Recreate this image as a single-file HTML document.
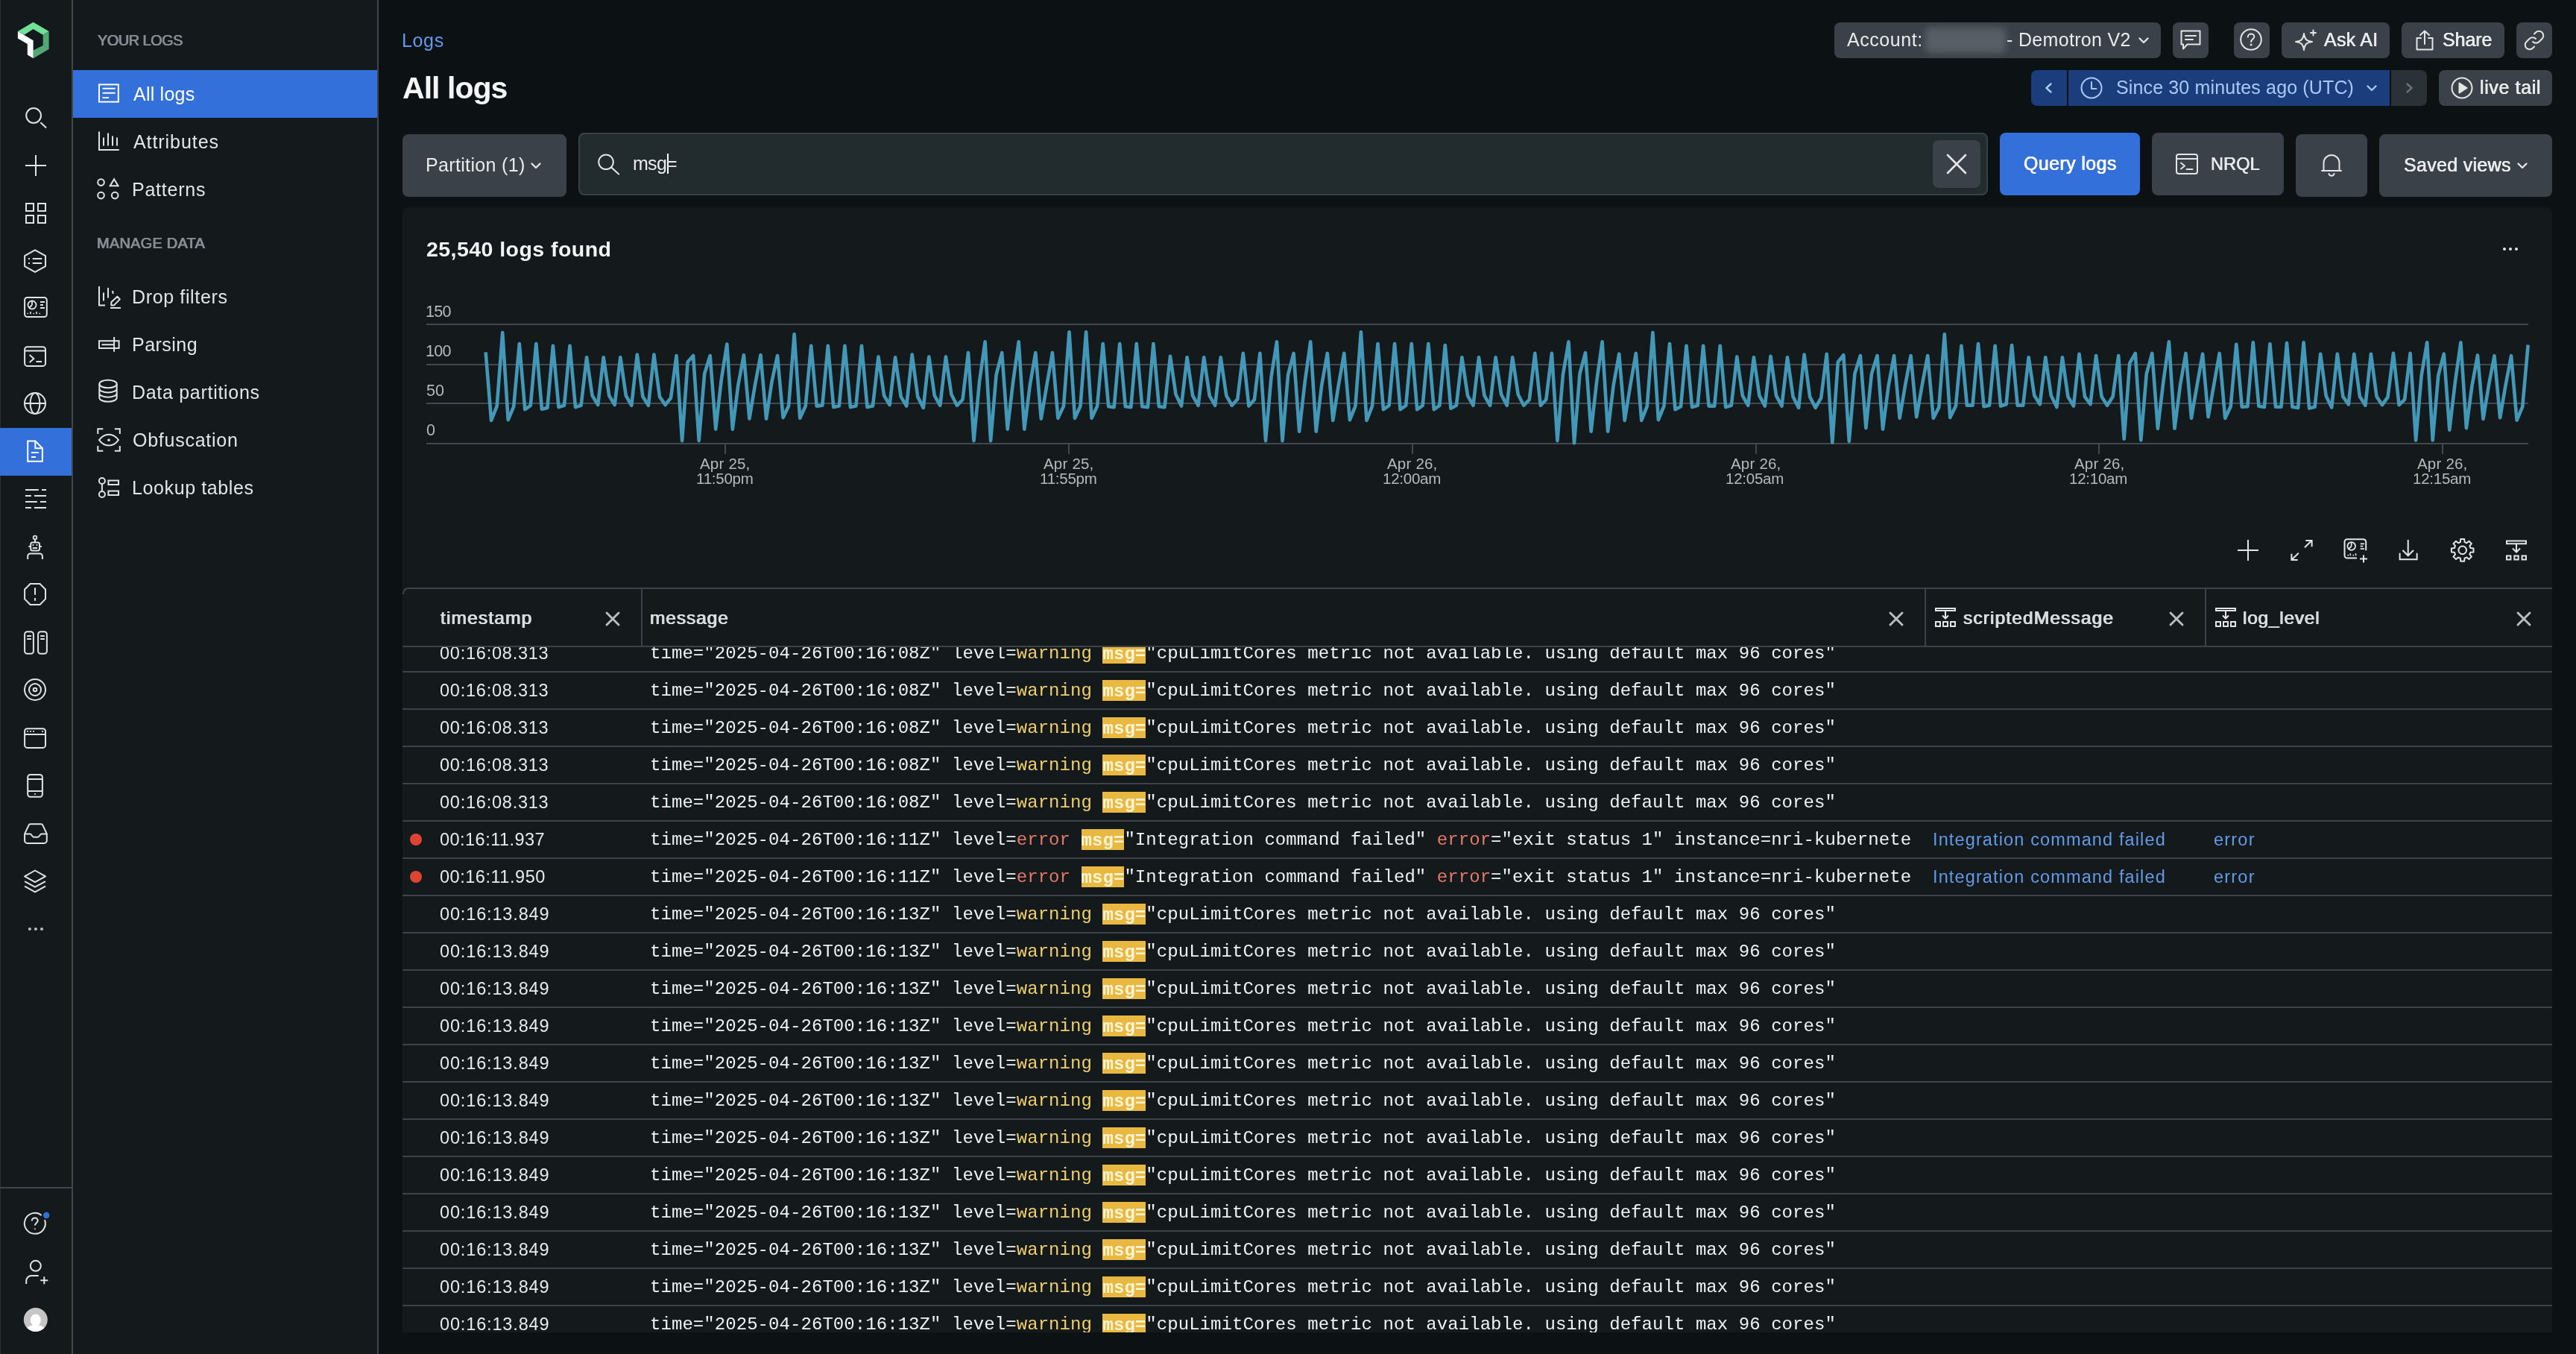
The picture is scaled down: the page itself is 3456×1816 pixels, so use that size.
<!DOCTYPE html>
<html lang="en">
<head>
<meta charset="utf-8">
<title>All logs</title>
<style>
*{box-sizing:border-box;margin:0;padding:0}
html,body{width:3456px;height:1816px;overflow:hidden;background:#0c1214}
body{position:relative;font-family:"Liberation Sans",sans-serif;color:#e8eaeb;font-size:24px}
.abs{position:absolute}
.t{position:absolute;white-space:nowrap;will-change:transform}
svg{display:block;overflow:visible}
.ico{position:absolute;fill:none;stroke:#e3e5e6;stroke-width:2;stroke-linecap:round;stroke-linejoin:round}
#rail{position:absolute;left:0;top:0;width:98px;height:1816px;background:#141a1c;border-right:2px solid #3f454b}
#rail .sel{position:absolute;left:0;top:574px;width:96px;height:64px;background:#3470d9}
#rail .sep{position:absolute;left:0;top:1592px;width:96px;height:2px;background:#3f454b}
#rail .edge{position:absolute;left:0;top:0;width:1px;height:1816px;background:#2b3035}
#side{position:absolute;left:98px;top:0;width:410px;height:1816px;background:#141a1c;border-right:2px solid #3f454b}
#side .on{position:absolute;left:0;top:94px;width:408px;height:64px;background:#3470d9}
.btn{position:absolute;background:#3a4148;border-radius:8px}
#panel{position:absolute;left:540px;top:278px;width:2884px;height:1509px;background:#141a1c;border-radius:8px 8px 0 0}
.gl{position:absolute;left:572px;width:2820px;height:2px;background:#43484f}
.hl{position:absolute;left:540px;width:2884px;height:2px;background:#3b4249}
.vl{position:absolute;top:790px;width:2px;height:76px;background:#3b4249}
#rows{position:absolute;left:540px;top:868px;width:2884px;height:919px;overflow:hidden}
.row{position:absolute;left:0;width:2884px;height:50px;border-bottom:2px solid #3b4249}
.msg{will-change:transform;position:absolute;left:331.7px;top:0;line-height:50px;letter-spacing:0.06px;white-space:nowrap;font-family:"Liberation Mono",monospace;font-size:24px;color:#f0f1f2}
.w{color:#f0cf6c}
.e{color:#e5786a}
.m{background:#e8b840;color:#fff4d6;font-weight:bold;padding:1.5px 0 0}
.dot{position:absolute;left:10px;top:16px;width:16px;height:16px;border-radius:50%;background:#dd4433}

</style>
</head>
<body>
<div id="rail">
<div class="edge"></div>
<div class="sel"></div>
<div class="sep"></div>
<svg class="abs" style="left:0;top:0" width="96" height="1816" viewBox="0 0 96 1816" fill="none" stroke="#e0e3e4" stroke-width="2" stroke-linejoin="round">
<!-- logo -->
<g stroke="none">
<polygon fill="#70e198" points="44.6,29.8 23.9,42.1 32.5,46.7 44.6,39 57.7,46.7 65.6,42.1"/>
<polygon fill="#52a873" points="65.6,42.1 65.6,66 44.6,78.3 44.6,67.6 57.7,60.9 57.7,46.7"/>
<polygon fill="#ffffff" points="23.9,42.1 44.6,54.2 44.6,78.3 36.8,73.5 36.8,58.9 23.9,51.6"/>
</g>
<!-- search -->
<circle cx="45.100" cy="155" r="9.900"/><path d="M54.400 164.300l7.700 7.300"/>
<!-- plus -->
<path d="M48 208v28M34 222h28"/>
<!-- grid -->
<g stroke-linejoin="miter"><rect x="35" y="273" width="10" height="10"/><rect x="51" y="273" width="10" height="10"/><rect x="35" y="289" width="10" height="10"/><rect x="51" y="289" width="10" height="10"/></g>
<!-- hex list -->
<path d="M47 335.400l14 7.800v14l-14 7.700-13.900-7.700v-14z"/><path d="M43.700 347.100h12.500M43.700 353h12.500"/><path d="M38 347.100h2M38 353h2"/>
<!-- dashboard -->
<rect x="33.100" y="399" width="29.700" height="26" rx="3.500"/><circle cx="43" cy="409" r="5.500" stroke-width="1.800"/><path d="M43 409v-5.500M43 409l-4 4" stroke-width="1.800"/><path d="M54 405h6M54 409h4M54 413h6"/><path d="M36.500 420.500h1.500M44.500 420.500h1.500M52.500 420.500h1.500M41 421.300v-3.300M49 421.300v-3.300" stroke-width="1.600"/>
<!-- terminal -->
<rect x="33.100" y="465.200" width="27.900" height="25.700" rx="3.500"/><path d="M33.100 470.600h27.900M39.700 476l5.700 5-5.700 5M48.400 485h7.600"/>
<!-- globe -->
<circle cx="47" cy="541" r="14"/><path d="M33 541h28"/><ellipse cx="47" cy="541" rx="6.400" ry="14"/>
<!-- doc (selected) -->
<g stroke="#ffffff" stroke-linejoin="miter"><path d="M37.200 591.400h10.100l9.600 9.800v17.500h-19.700z"/><path d="M47.300 591.400v9.800h9.600"/><path d="M42 607h10M42 612.900h6"/></g>
<!-- sliders -->
<path d="M34 657h17.800M56 657h6M34 665h7.900M46 665h16M34 673h15.800M54 673h8M34 681h7.900M46 681h16"/>
<!-- robot -->
<circle cx="47" cy="721" r="2.300" stroke-width="1.800"/><path d="M47 723.500v3.500"/><rect x="41.200" y="727.400" width="11.800" height="11.200" rx="2.500"/><path d="M38.300 733h2.500M53.300 733h2.500"/><path d="M43.600 731h1.800M48.600 731h1.800M43.700 735h6.300" stroke-width="1.800"/><path d="M37.200 750v-4a3.500 3.500 0 0 1 3.500-3.500h12.700a3.500 3.500 0 0 1 3.500 3.500v4"/>
<!-- octagon alert -->
<path d="M40.600 783h12.900l7.500 7.500v12.900l-7.500 7.600h-12.900l-7.500-7.600v-12.900z"/><path d="M47 788.200v9.500M47 802v3.700"/>
<!-- books -->
<rect x="33.100" y="847.200" width="11.800" height="29.600" rx="3.500"/><rect x="51.100" y="847.200" width="11.800" height="29.600" rx="3.500"/><path d="M36.200 853h5.700M36.200 857h5.700M54.200 853h5.700M54.200 857h5.700" stroke-width="1.800"/>
<!-- target -->
<circle cx="47" cy="925" r="14"/><circle cx="47" cy="925" r="8"/><circle cx="47" cy="925" r="2.300"/>
<!-- browser -->
<rect x="33.100" y="977.200" width="27.900" height="25.700" rx="3.500"/><path d="M33.100 985h27.900"/><path d="M36.200 981h1.700M40.200 981h1.700M44.200 981h1.700M56.200 981h1.700" stroke-width="1.800"/>
<!-- mobile -->
<rect x="37.200" y="1039" width="19.700" height="29.700" rx="3.500"/><path d="M37.200 1044.900h19.700M37.200 1061h19.700"/><path d="M46.200 1065h1.700" stroke-width="1.800"/>
<!-- inbox -->
<path d="M33.100 1118.400l5.400-11.600a2.500 2.500 0 0 1 2.300-1.600h14.300a2.500 2.500 0 0 1 2.300 1.600l5.400 11.600v9a3.500 3.500 0 0 1-3.500 3.500h-22.700a3.500 3.500 0 0 1-3.500-3.500z"/><path d="M33.100 1118.400h7.500c1.500 0 2.500 4.300 4.800 4.300h5.200c2.300 0 3.300-4.300 4.800-4.300h7.400"/>
<!-- layers -->
<path d="M47 1167.500l14 7.800-14 7.800-13.900-7.800z"/><path d="M33.100 1182.100l13.900 7.600 14-7.600M33.100 1188.700l13.900 7.700 14-7.700"/>
<!-- dots -->
<g fill="#b8bcbf" stroke="none"><circle cx="39.900" cy="1246" r="2.100"/><circle cx="47.900" cy="1246" r="2.100"/><circle cx="56" cy="1246" r="2.100"/></g>
<!-- help -->
<path d="M55.700 1630a14 14 0 1 0 4.300 6"/><path d="M42.800 1637.400c0-2.300 1.800-3.900 4-3.900s3.900 1.500 3.900 3.600c0 2.900-3.800 3.200-3.800 6.400"/><path d="M46.900 1647.600v1.200" stroke-width="2.200"/>
<circle cx="62.200" cy="1630" r="4.200" fill="#3470d9" stroke="none"/>
<!-- add user -->
<circle cx="47.800" cy="1697.800" r="7"/><path d="M35.200 1722v-4a7 7 0 0 1 7-7h9.500"/><path d="M59.300 1712.200v10M54.300 1717.200h10"/>
<!-- avatar -->
<g stroke="none"><circle cx="47.800" cy="1770" r="16" fill="#c5c5c5"/><clipPath id="av"><circle cx="47.800" cy="1770" r="16"/></clipPath><g clip-path="url(#av)" fill="#ffffff"><ellipse cx="47.800" cy="1770.500" rx="7" ry="8"/><path d="M47.800 1777c-7 0-13 3-14 9h28c-1-6-7-9-14-9z"/></g></g>
</svg>

</div>
<div id="side">
<div class="on"></div>
<svg class="abs" style="left:0;top:0" width="408" height="700" viewBox="98 0 408 700" fill="none" stroke="#e0e3e4" stroke-width="2">
<!-- all logs (white) -->
<g stroke="#ffffff"><rect x="133" y="113.400" width="25.800" height="23.200"/><path d="M137.600 118.700h17M137.600 124.800h17M137.600 130.900h8.500"/></g>
<!-- attributes -->
<path d="M133 176.500v24.500h26.800M139 184.500v11M145 178.600v16.900M151 182.600v12.900M157 184.500v11"/>
<!-- patterns -->
<circle cx="135.500" cy="244.600" r="4.300"/><path d="M153.100 240.300l5.400 8.900h-10.800z" stroke-linejoin="miter"/><circle cx="135.500" cy="262.100" r="4.300"/><circle cx="154.200" cy="262.100" r="4.300"/>
<!-- drop filters -->
<path d="M133 384v25.400h8M139 392.400v11M145 386v13.500M151 390l0.800 4"/><path d="M157.400 397.800l3.400 3.600-7.800 8h-3.700v-4.200z" stroke-linejoin="round"/><path d="M148 413h14"/>
<!-- parsing -->
<path d="M133 457.200h26.600v9.800h-26.600zM136.500 462.200h16.500M153.100 452v19.800"/>
<!-- data partitions -->
<ellipse cx="145" cy="515" rx="11.700" ry="5.300"/><path d="M133.300 515v18.500c0 2.900 5.200 5.300 11.700 5.300s11.700-2.400 11.700-5.300v-18.500M133.300 521.200c0 2.900 5.200 5.300 11.700 5.300s11.700-2.400 11.700-5.300M133.300 527.400c0 2.900 5.200 5.300 11.700 5.300s11.700-2.400 11.700-5.300"/>
<!-- obfuscation -->
<path d="M131.300 582v-6.700h7M153.800 575.300h7v6.700M160.800 598v6.700h-7M138.300 604.700h-7v-6.700"/><path d="M133 590.200c3.500-4.800 8-7.400 13-7.400s9.500 2.600 13 7.400c-3.500 4.800-8 7.400-13 7.400s-9.500-2.600-13-7.400z" stroke-linejoin="round"/><circle cx="146" cy="590.200" r="1.800" fill="#e0e3e4" stroke="none"/>
<!-- lookup tables -->
<circle cx="136.900" cy="645" r="4"/><circle cx="136.900" cy="663" r="4"/><path d="M136.900 649v10M145.400 644.400h13.600v5.500h-13.600zM145.400 658.400h13.600v5.600h-13.600z"/>
</svg>

</div>
<div class="t" style="left:131.01px;top:41.80px;font-size:20px;line-height:24px;letter-spacing:-0.56px;color:#868c92;text-shadow:0.45px 0 0 #868c92,-0.45px 0 0 #868c92;">YOUR LOGS</div>
<div class="t" style="left:129.81px;top:314.30px;font-size:20px;line-height:24px;letter-spacing:0.22px;color:#868c92;text-shadow:0.45px 0 0 #868c92,-0.45px 0 0 #868c92;">MANAGE DATA</div>
<div class="t" style="left:179.15px;top:110.80px;font-size:25px;line-height:30px;letter-spacing:0.22px;color:#ffffff;">All logs</div>
<div class="t" style="left:179.15px;top:174.80px;font-size:25px;line-height:30px;letter-spacing:0.93px;color:#e3e5e6;">Attributes</div>
<div class="t" style="left:177.15px;top:238.80px;font-size:25px;line-height:30px;letter-spacing:0.76px;color:#e3e5e6;">Patterns</div>
<div class="t" style="left:177.15px;top:383.10px;font-size:25px;line-height:30px;letter-spacing:0.64px;color:#e3e5e6;">Drop filters</div>
<div class="t" style="left:177.15px;top:447.10px;font-size:25px;line-height:30px;letter-spacing:0.48px;color:#e3e5e6;">Parsing</div>
<div class="t" style="left:177.15px;top:511.10px;font-size:25px;line-height:30px;letter-spacing:0.70px;color:#e3e5e6;">Data partitions</div>
<div class="t" style="left:178.02px;top:575.10px;font-size:25px;line-height:30px;letter-spacing:0.74px;color:#e3e5e6;">Obfuscation</div>
<div class="t" style="left:177.15px;top:639.10px;font-size:25px;line-height:30px;letter-spacing:0.61px;color:#e3e5e6;">Lookup tables</div>
<div class="t" style="left:539.35px;top:38.70px;font-size:25px;line-height:30px;letter-spacing:0.65px;color:#6299ea;">Logs</div>
<div class="t" style="left:540.22px;top:92.10px;font-size:41px;line-height:52px;letter-spacing:-0.95px;color:#f4f5f5;font-weight:bold;">All logs</div>
<div class="btn" style="left:2461px;top:30px;width:438px;height:48px">
  <div class="abs" style="left:122px;top:7px;width:108px;height:34px;background:#5d646b;border-radius:6px;filter:blur(5px);opacity:.85"></div>
  <svg class="ico" style="left:408px;top:20px" width="14" height="9" viewBox="0 0 14 9"><path d="M1.5 1.5l5.5 5.5 5.5-5.5" stroke-width="2.4"/></svg>
</div>
<div class="btn" style="left:2915px;top:30px;width:48px;height:48px">
  <svg class="ico" style="left:10px;top:10px" width="28" height="28" viewBox="0 0 28 28"><path d="M1.5 1.5h25v18h-17l-5.500 6v-6h-2.500z"/><path d="M7 8h14M7 13h10"/></svg>
</div>
<div class="btn" style="left:2997px;top:30px;width:48px;height:48px">
  <svg class="ico" style="left:8px;top:7.500px" width="30" height="30" viewBox="0 0 30 30"><circle cx="15" cy="15" r="13.800"/><path d="M10.800 11.600c0-2.400 1.900-4.100 4.300-4.100s4.200 1.600 4.200 3.800c0 3.200-4.200 3.300-4.200 6.700"/><circle cx="15.100" cy="22" r="0.600" fill="#e3e5e6"/></svg>
</div>
<div class="btn" style="left:3061px;top:30px;width:145px;height:48px">
  <svg class="ico" style="left:16px;top:9px" width="32" height="32" viewBox="0 0 32 32"><path d="M14 6c1 7.500 3.500 10 11 11c-7.500 1-10 3.500-11 11c-1-7.500-3.500-10-11-11c7.500-1 10-3.500 11-11z"/><path d="M26.500 1.500v7M23 5h7"/></svg>
</div>
<div class="btn" style="left:3222px;top:30px;width:138px;height:48px">
  <svg class="ico" style="left:19px;top:10px" width="24" height="28" viewBox="0 0 24 28"><path d="M7 11h-5.500v15.500h21v-15.500h-5.500"/><path d="M12 19v-17.500M6 7l6-5.500 6 5.500"/></svg>
</div>
<div class="btn" style="left:3376px;top:30px;width:48px;height:48px">
  <svg class="ico" style="left:10px;top:10px" width="28" height="28" viewBox="0 0 28 28"><path d="M12 16a6 6 0 0 0 8.500 0l4-4a6 6 0 0 0-8.500-8.500l-2 2"/><path d="M16 12a6 6 0 0 0-8.500 0l-4 4a6 6 0 0 0 8.500 8.500l2-2"/></svg>
</div>
<div class="abs" style="left:2725px;top:94px;width:48px;height:48px;background:#1c3d7c;border-radius:8px 0 0 8px">
  <svg class="ico" style="left:19px;top:17px;stroke:#a9c8f7" width="9" height="14" viewBox="0 0 9 14"><path d="M7.500 1.500l-6 5.500 6 5.500" stroke-width="2.400"/></svg>
</div>
<div class="abs" style="left:2775px;top:94px;width:431px;height:48px;background:#1c3d7c">
  <svg class="ico" style="left:16px;top:9px;stroke:#a9c8f7" width="30" height="30" viewBox="0 0 30 30"><circle cx="15" cy="15" r="13.500"/><path d="M15 7v9h6.500"/></svg>
  <svg class="ico" style="left:400px;top:20px;stroke:#a9c8f7" width="14" height="9" viewBox="0 0 14 9"><path d="M1.500 1.500l5.500 5.500 5.500-5.500" stroke-width="2.400"/></svg>
</div>
<div class="abs" style="left:3208px;top:94px;width:48px;height:48px;background:#2a3238;border-radius:0 8px 8px 0">
  <svg class="ico" style="left:20px;top:17px;stroke:#6d747b" width="9" height="14" viewBox="0 0 9 14"><path d="M1.500 1.500l6 5.500-6 5.500" stroke-width="2.400"/></svg>
</div>
<div class="btn" style="left:3272px;top:94px;width:152px;height:48px">
  <svg class="ico" style="left:16px;top:9px" width="30" height="30" viewBox="0 0 30 30"><circle cx="15" cy="15" r="13.500"/><path d="M11.500 8.500l10 6.500-10 6.500z" fill="#e3e5e6"/></svg>
</div>
<div class="btn" style="left:540px;top:180px;width:220px;height:84px">
  <svg class="ico" style="left:172px;top:38px" width="14" height="9" viewBox="0 0 14 9"><path d="M1.500 1.500l5.500 5.500 5.500-5.500" stroke-width="2.400"/></svg>
</div>
<div class="abs" style="left:776px;top:178px;width:1891px;height:84px;background:#222b2e;border:2px solid #394147;border-radius:8px">
  <svg class="ico" style="left:24px;top:26px" width="30" height="30" viewBox="0 0 30 30"><circle cx="11" cy="11.300" r="9.800"/><path d="M18.200 18.500l9.900 9.100"/></svg>
  <div class="abs" style="left:116.500px;top:26px;width:2px;height:27px;background:#fff"></div>
  <div class="abs" style="left:1815px;top:8px;width:64px;height:64px;background:#3a4148;border-radius:8px">
    <svg class="ico" style="left:19px;top:19px" width="26" height="26" viewBox="0 0 26 26"><path d="M1 1l24 24M25 1l-24 24" stroke-width="2.600"/></svg>
  </div>
</div>
<div class="btn" style="left:2683px;top:178px;width:188px;height:84px;background:#3470d9"></div>
<div class="btn" style="left:2887px;top:178px;width:177px;height:84px">
  <svg class="ico" style="left:32px;top:28px" width="30" height="28" viewBox="0 0 30 28"><rect x="1" y="1" width="28" height="26" rx="3"/><path d="M1 7h28M7 12.500l5 4-5 4M14.500 21h8"/></svg>
</div>
<div class="btn" style="left:3080px;top:180px;width:96px;height:84px">
  <svg class="ico" style="left:34px;top:27px" width="28" height="30" viewBox="0 0 28 30"><path d="M3.500 22v-10.500a10.500 10.500 0 0 1 21 0v10.500M1 22h26M10.500 26a3.600 3.600 0 0 0 7 0"/></svg>
</div>
<div class="btn" style="left:3192px;top:180px;width:232px;height:84px">
  <svg class="ico" style="left:185px;top:38px" width="14" height="9" viewBox="0 0 14 9"><path d="M1.500 1.500l5.500 5.500 5.500-5.500" stroke-width="2.400"/></svg>
</div>

<div class="t" style="left:2478.15px;top:38.00px;font-size:25px;line-height:30px;letter-spacing:0.55px;color:#e8eaeb;">Account:</div>
<div class="t" style="left:2692.30px;top:38.00px;font-size:25px;line-height:30px;letter-spacing:0.32px;color:#e8eaeb;">- Demotron V2</div>
<div class="t" style="left:3117.75px;top:38.00px;font-size:25px;line-height:30px;letter-spacing:0.26px;color:#e8eaeb;text-shadow:0.3px 0 0 #e8eaeb,-0.3px 0 0 #e8eaeb;">Ask AI</div>
<div class="t" style="left:3277.38px;top:38.00px;font-size:25px;line-height:30px;letter-spacing:-0.07px;color:#e8eaeb;text-shadow:0.3px 0 0 #e8eaeb,-0.3px 0 0 #e8eaeb;">Share</div>
<div class="t" style="left:2839.07px;top:102.30px;font-size:25px;line-height:30px;letter-spacing:0.14px;color:#a9c8f7;">Since 30 minutes ago (UTC)</div>
<div class="t" style="left:3327.32px;top:102.30px;font-size:25px;line-height:30px;letter-spacing:0.63px;color:#e8eaeb;text-shadow:0.3px 0 0 #e8eaeb,-0.3px 0 0 #e8eaeb;">live tail</div>
<div class="t" style="left:571.25px;top:206.00px;font-size:25px;line-height:30px;letter-spacing:0.34px;color:#e8eaeb;">Partition (1)</div>
<div class="t" style="left:849.15px;top:203.90px;font-size:25px;line-height:30px;letter-spacing:-0.72px;color:#e8eaeb;">msg=</div>
<div class="t" style="left:2714.53px;top:204.10px;font-size:25px;line-height:30px;letter-spacing:0.39px;color:#ffffff;text-shadow:0.3px 0 0 #ffffff,-0.3px 0 0 #ffffff;">Query logs</div>
<div class="t" style="left:2966.37px;top:206.10px;font-size:23.5px;line-height:28px;letter-spacing:0.14px;color:#e8eaeb;text-shadow:0.3px 0 0 #e8eaeb,-0.3px 0 0 #e8eaeb;">NRQL</div>
<div class="t" style="left:3224.58px;top:205.60px;font-size:25px;line-height:30px;letter-spacing:0.31px;color:#e8eaeb;text-shadow:0.3px 0 0 #e8eaeb,-0.3px 0 0 #e8eaeb;">Saved views</div>
<div id="panel"></div>
<div class="t" style="left:572.33px;top:317.10px;font-size:28.5px;line-height:34px;letter-spacing:0.45px;color:#f4f5f5;font-weight:bold;">25,540 logs found</div>
<svg class="abs" style="left:3357px;top:331px" width="22" height="6" viewBox="0 0 22 6"><circle cx="3" cy="3" r="2" fill="#e3e5e6"/><circle cx="11" cy="3" r="2" fill="#e3e5e6"/><circle cx="19" cy="3" r="2" fill="#e3e5e6"/></svg>
<div class="gl" style="top:434.1px"></div>
<div class="t" style="left:571.27px;top:406.00px;font-size:21.5px;line-height:24px;letter-spacing:-0.71px;color:#b5b9bd;">150</div>
<div class="gl" style="top:488.0px"></div>
<div class="t" style="left:571.27px;top:459.00px;font-size:21.5px;line-height:24px;letter-spacing:-0.71px;color:#b5b9bd;">100</div>
<div class="gl" style="top:539.9px"></div>
<div class="t" style="left:572.04px;top:511.70px;font-size:21.5px;line-height:24px;letter-spacing:0.07px;color:#b5b9bd;">50</div>
<div class="gl" style="top:593.8px"></div>
<div class="t" style="left:572.06px;top:564.80px;font-size:21.5px;line-height:24px;letter-spacing:0.30px;color:#b5b9bd;">0</div>
<svg class="abs" style="left:640px;top:425px" width="2764" height="180" viewBox="640 425 2764 180"><polyline fill="none" stroke="#4398b8" stroke-width="4.6" stroke-linejoin="round" stroke-linecap="butt" points="651.6,472.4 659.1,564.0 666.7,544.6 674.2,446.0 681.7,563.2 689.2,545.3 696.8,461.0 704.3,549.2 711.8,543.8 719.3,461.0 726.9,548.8 734.4,546.9 741.9,463.8 749.5,546.1 757.0,543.8 764.5,463.8 772.0,546.1 779.6,543.8 787.1,479.3 794.6,530.6 802.2,543.0 809.7,479.3 817.2,530.6 824.7,543.0 832.3,479.3 839.8,530.6 847.3,543.8 854.8,475.5 862.4,532.1 869.9,543.8 877.4,475.5 885.0,532.1 892.5,543.0 900.0,533.7 907.5,477.0 915.1,591.1 922.6,485.6 930.1,477.0 937.7,591.1 945.2,501.1 952.7,477.0 960.2,575.6 967.8,508.9 975.3,461.5 982.8,575.6 990.3,516.6 997.9,476.2 1005.4,561.6 1012.9,516.6 1020.5,476.2 1028.0,561.6 1035.5,512.0 1043.0,477.0 1050.6,560.1 1058.1,544.6 1065.6,448.3 1073.2,560.9 1080.7,544.6 1088.2,463.8 1095.7,544.6 1103.3,543.8 1110.8,463.8 1118.3,546.1 1125.8,544.6 1133.4,463.8 1140.9,546.1 1148.4,544.6 1156.0,463.8 1163.5,546.1 1171.0,544.6 1178.5,478.6 1186.1,530.6 1193.6,543.0 1201.1,479.3 1208.7,532.1 1216.2,544.6 1223.7,475.5 1231.2,532.1 1238.8,546.9 1246.3,478.6 1253.8,530.6 1261.3,543.8 1268.9,478.6 1276.4,529.0 1283.9,543.8 1291.5,536.0 1299.0,473.1 1306.5,591.1 1314.0,512.0 1321.6,458.4 1329.1,591.1 1336.6,502.6 1344.2,473.1 1351.7,575.6 1359.2,512.0 1366.7,458.4 1374.3,575.6 1381.8,516.6 1389.3,473.1 1396.8,561.6 1404.4,516.6 1411.9,473.1 1419.4,560.9 1427.0,544.6 1434.5,445.2 1442.0,560.9 1449.5,544.6 1457.1,445.2 1464.6,560.9 1472.1,544.6 1479.7,461.0 1487.2,545.3 1494.7,546.1 1502.2,461.0 1509.8,545.3 1517.3,546.1 1524.8,461.0 1532.3,545.3 1539.9,546.1 1547.4,461.0 1554.9,545.3 1562.5,546.1 1570.0,477.8 1577.5,529.0 1585.0,544.6 1592.6,479.3 1600.1,530.6 1607.6,543.8 1615.2,479.3 1622.7,530.6 1630.2,543.8 1637.7,479.3 1645.3,530.6 1652.8,543.8 1660.3,535.2 1667.8,473.9 1675.4,544.6 1682.9,536.0 1690.4,473.9 1698.0,591.1 1705.5,505.7 1713.0,458.4 1720.5,591.1 1728.1,502.6 1735.6,473.9 1743.1,578.7 1750.7,512.0 1758.2,458.4 1765.7,578.7 1773.2,516.6 1780.8,473.9 1788.3,564.0 1795.8,516.6 1803.3,473.9 1810.9,563.2 1818.4,544.6 1825.9,445.2 1833.5,564.0 1841.0,544.6 1848.5,461.0 1856.0,549.2 1863.6,543.8 1871.1,461.0 1878.6,549.2 1886.2,543.8 1893.7,461.0 1901.2,549.2 1908.7,543.8 1916.3,461.0 1923.8,549.2 1931.3,543.8 1938.8,463.0 1946.4,547.7 1953.9,543.8 1961.4,479.3 1969.0,530.6 1976.5,543.8 1984.0,479.3 1991.5,530.6 1999.1,543.8 2006.6,479.3 2014.1,529.0 2021.7,543.8 2029.2,479.3 2036.7,529.0 2044.2,543.8 2051.8,536.0 2059.3,473.9 2066.8,543.8 2074.3,536.0 2081.9,473.9 2089.4,591.1 2096.9,502.6 2104.5,458.4 2112.0,594.3 2119.5,501.1 2127.0,473.1 2134.6,578.7 2142.1,512.0 2149.6,458.4 2157.1,578.7 2164.7,516.6 2172.2,474.7 2179.7,564.0 2187.3,516.6 2194.8,473.9 2202.3,564.0 2209.8,544.6 2217.4,446.0 2224.9,563.2 2232.4,544.6 2240.0,461.0 2247.5,549.2 2255.0,545.3 2262.5,463.8 2270.1,546.1 2277.6,543.8 2285.1,463.8 2292.6,544.6 2300.2,544.6 2307.7,463.8 2315.2,546.1 2322.8,543.8 2330.3,478.6 2337.8,530.6 2345.3,543.8 2352.9,479.3 2360.4,530.6 2367.9,544.6 2375.5,477.8 2383.0,530.6 2390.5,544.6 2398.0,479.3 2405.6,532.1 2413.1,546.9 2420.6,475.5 2428.1,532.1 2435.7,546.9 2443.2,533.7 2450.7,474.7 2458.3,593.5 2465.8,485.6 2473.3,476.2 2480.8,591.9 2488.4,501.1 2495.9,477.0 2503.4,574.1 2511.0,501.1 2518.5,477.0 2526.0,575.6 2533.5,518.2 2541.1,477.0 2548.6,560.9 2556.1,516.6 2563.6,477.0 2571.2,559.3 2578.7,516.6 2586.2,477.0 2593.8,560.9 2601.3,546.1 2608.8,448.3 2616.3,560.1 2623.9,544.6 2631.4,463.8 2638.9,543.8 2646.5,543.8 2654.0,461.0 2661.5,545.3 2669.0,543.8 2676.6,463.8 2684.1,544.6 2691.6,542.2 2699.1,463.0 2706.7,543.8 2714.2,543.8 2721.7,479.3 2729.3,530.6 2736.8,542.2 2744.3,479.3 2751.8,530.6 2759.4,546.1 2766.9,479.3 2774.4,532.1 2782.0,544.6 2789.5,474.7 2797.0,532.1 2804.5,542.2 2812.1,477.0 2819.6,532.1 2827.1,543.8 2834.6,532.1 2842.2,477.0 2849.7,588.8 2857.2,487.1 2864.8,473.9 2872.3,590.4 2879.8,501.1 2887.3,473.9 2894.9,574.8 2902.4,512.0 2909.9,458.4 2917.5,574.8 2925.0,516.6 2932.5,473.9 2940.0,560.9 2947.6,516.6 2955.1,474.7 2962.6,559.3 2970.1,516.6 2977.7,473.9 2985.2,560.9 2992.7,545.3 3000.3,461.7 3007.8,545.7 3015.3,545.3 3022.8,459.2 3030.4,544.8 3037.9,546.0 3045.4,461.2 3053.0,545.7 3060.5,545.7 3068.0,460.1 3075.5,545.7 3083.1,547.0 3090.6,459.2 3098.1,547.6 3105.6,545.7 3113.2,474.7 3120.7,531.0 3128.2,546.5 3135.8,474.7 3143.3,531.8 3150.8,542.4 3158.3,474.7 3165.9,531.8 3173.4,543.7 3180.9,474.7 3188.5,531.8 3196.0,543.2 3203.5,532.6 3211.0,473.9 3218.6,543.2 3226.1,535.9 3233.6,473.9 3241.1,590.5 3248.7,503.3 3256.2,459.2 3263.7,590.5 3271.3,503.3 3278.8,474.7 3286.3,576.6 3293.8,513.0 3301.4,459.2 3308.9,574.2 3316.4,517.9 3324.0,476.4 3331.5,562.0 3339.0,516.3 3346.5,477.2 3354.1,560.3 3361.6,516.3 3369.1,477.2 3376.6,563.6 3384.2,545.7 3391.7,462.5"/></svg>
<div class="abs" style="left:972.1px;top:595.8px;width:2px;height:13px;background:#43484f"></div>
<div class="t" style="left:939.35px;top:609.50px;font-size:20.5px;line-height:24px;letter-spacing:0.20px;color:#b5b9bd;">Apr 25,</div>
<div class="t" style="left:933.71px;top:629.50px;font-size:20.5px;line-height:24px;letter-spacing:-0.25px;color:#b5b9bd;">11:50pm</div>
<div class="abs" style="left:1432.9px;top:595.8px;width:2px;height:13px;background:#43484f"></div>
<div class="t" style="left:1400.15px;top:609.50px;font-size:20.5px;line-height:24px;letter-spacing:0.20px;color:#b5b9bd;">Apr 25,</div>
<div class="t" style="left:1394.51px;top:629.50px;font-size:20.5px;line-height:24px;letter-spacing:-0.25px;color:#b5b9bd;">11:55pm</div>
<div class="abs" style="left:1893.7px;top:595.8px;width:2px;height:13px;background:#43484f"></div>
<div class="t" style="left:1860.95px;top:609.50px;font-size:20.5px;line-height:24px;letter-spacing:0.20px;color:#b5b9bd;">Apr 26,</div>
<div class="t" style="left:1854.55px;top:629.50px;font-size:20.5px;line-height:24px;letter-spacing:-0.25px;color:#b5b9bd;">12:00am</div>
<div class="abs" style="left:2354.5px;top:595.8px;width:2px;height:13px;background:#43484f"></div>
<div class="t" style="left:2321.75px;top:609.50px;font-size:20.5px;line-height:24px;letter-spacing:0.20px;color:#b5b9bd;">Apr 26,</div>
<div class="t" style="left:2315.35px;top:629.50px;font-size:20.5px;line-height:24px;letter-spacing:-0.25px;color:#b5b9bd;">12:05am</div>
<div class="abs" style="left:2815.3px;top:595.8px;width:2px;height:13px;background:#43484f"></div>
<div class="t" style="left:2782.55px;top:609.50px;font-size:20.5px;line-height:24px;letter-spacing:0.20px;color:#b5b9bd;">Apr 26,</div>
<div class="t" style="left:2776.15px;top:629.50px;font-size:20.5px;line-height:24px;letter-spacing:-0.25px;color:#b5b9bd;">12:10am</div>
<div class="abs" style="left:3276.1px;top:595.8px;width:2px;height:13px;background:#43484f"></div>
<div class="t" style="left:3243.35px;top:609.50px;font-size:20.5px;line-height:24px;letter-spacing:0.20px;color:#b5b9bd;">Apr 26,</div>
<div class="t" style="left:3236.95px;top:629.50px;font-size:20.5px;line-height:24px;letter-spacing:-0.25px;color:#b5b9bd;">12:15am</div>
<svg class="abs" style="left:2990px;top:710px" width="420" height="60" viewBox="2990 710 420 60" fill="none" stroke="#e3e5e6" stroke-width="2">
<path d="M3016 724v28M3002 738h28"/>
<path d="M3092 734.200l9.400-9.200M3093.300 725h8.300v8.300M3083.800 741.800l-9.400 9.200M3082.700 751h-8.300v-8.300"/>
<path d="M3162 748.500h-13a3.500 3.500 0 0 1-3.500-3.500v-18.300a3.500 3.500 0 0 1 3.500-3.500h21.700a3.500 3.500 0 0 1 3.500 3.500v11.500"/><circle cx="3154.700" cy="732.500" r="5.300" stroke-width="1.800"/><path d="M3154.700 732.500v-5.300M3154.700 732.500l-3.800 3.800M3166.700 729.400h5.300M3166.700 732.700h3.500M3166.700 736.200h5.300" stroke-width="1.800"/><path d="M3149.500 744.600h1.500M3156.500 744.600h1.500M3153.300 745.300v-3M3160.500 745.300v-3" stroke-width="1.600"/><path d="M3171 744.500v10M3166 749.500h10"/>
<path d="M3230.700 724v21M3223.400 738l7.300 7.300 7.300-7.300M3219.600 741.800v8.400h23v-8.400"/>
<path d="M3300.9 727.1 L3301.2 723.1 L3306.2 723.1 L3306.5 727.1 L3309.4 728.2 L3312.4 725.7 L3315.9 729.2 L3313.4 732.2 L3314.5 735.1 L3318.5 735.4 L3318.5 740.4 L3314.5 740.7 L3313.4 743.6 L3315.9 746.6 L3312.4 750.1 L3309.4 747.6 L3306.5 748.7 L3306.2 752.7 L3301.2 752.7 L3300.9 748.7 L3298.0 747.6 L3295.0 750.1 L3291.5 746.6 L3294.0 743.6 L3292.9 740.7 L3288.9 740.4 L3288.9 735.4 L3292.9 735.1 L3294.0 732.2 L3291.5 729.2 L3295.0 725.7 L3298.0 728.2Z" stroke-linejoin="round"/><circle cx="3303.700" cy="737.900" r="5.300"/>
<path d="M3363 725.400h26v3.800h-26zM3376 730v10M3371 735.500l5 5 5-5M3363 745.400h5.400v5h-5.400zM3373.300 745.400h5.400v5h-5.400zM3383.600 745.400h5.400v5h-5.400z"/>
</svg>
<div class="hl" style="top:788px;left:548px;width:2876px"></div><div class="hl" style="top:866px"></div>
<div class="abs" style="left:540px;top:788px;width:9px;height:9px;border-top-left-radius:8px;border-style:solid;border-color:#3b4249;border-width:2px 0 0 2px"></div>
<div class="vl" style="left:860px"></div>
<div class="vl" style="left:2582px"></div>
<div class="vl" style="left:2958px"></div>
<div class="t" style="left:591.18px;top:813.60px;font-size:24.5px;line-height:29px;letter-spacing:1.16px;color:#d9dcde;text-shadow:0.55px 0 0 #d9dcde,-0.55px 0 0 #d9dcde;">timestamp</div>
<div class="t" style="left:871.73px;top:813.60px;font-size:24.5px;line-height:29px;letter-spacing:0.90px;color:#d9dcde;text-shadow:0.55px 0 0 #d9dcde,-0.55px 0 0 #d9dcde;">message</div>
<div class="t" style="left:2634.19px;top:813.60px;font-size:24.5px;line-height:29px;letter-spacing:1.13px;color:#d9dcde;text-shadow:0.55px 0 0 #d9dcde,-0.55px 0 0 #d9dcde;">scriptedMessage</div>
<div class="t" style="left:3009.21px;top:813.60px;font-size:24.5px;line-height:29px;letter-spacing:0.74px;color:#d9dcde;text-shadow:0.55px 0 0 #d9dcde,-0.55px 0 0 #d9dcde;">log_level</div>
<svg class="ico" style="left:813.0px;top:821px;stroke:#b9bec1" width="18" height="18" viewBox="0 0 18 18"><path d="M1 1l16 16M17 1l-16 16" stroke-width="2.900"/></svg>
<svg class="ico" style="left:2534.5px;top:821px;stroke:#b9bec1" width="18" height="18" viewBox="0 0 18 18"><path d="M1 1l16 16M17 1l-16 16" stroke-width="2.900"/></svg>
<svg class="ico" style="left:2911.0px;top:821px;stroke:#b9bec1" width="18" height="18" viewBox="0 0 18 18"><path d="M1 1l16 16M17 1l-16 16" stroke-width="2.900"/></svg>
<svg class="ico" style="left:3377.0px;top:821px;stroke:#b9bec1" width="18" height="18" viewBox="0 0 18 18"><path d="M1 1l16 16M17 1l-16 16" stroke-width="2.900"/></svg>
<svg class="ico" style="left:2596px;top:815px" width="28" height="28" viewBox="0 0 28 28"><path d="M1 1h26v3h-26zM14 5v9M10 10.500l4 4 4-4M1 19h6v6h-6zM11 19h6v6h-6zM21 19h6v6h-6z" stroke-linejoin="miter" stroke-linecap="butt"/></svg>
<svg class="ico" style="left:2972px;top:815px" width="28" height="28" viewBox="0 0 28 28"><path d="M1 1h26v3h-26zM14 5v9M10 10.500l4 4 4-4M1 19h6v6h-6zM11 19h6v6h-6zM21 19h6v6h-6z" stroke-linejoin="miter" stroke-linecap="butt"/></svg>
<div id="rows">
<div class="row" style="top:-16px"><div class="t" style="left:50.08px;top:9.60px;font-size:23.5px;line-height:28px;letter-spacing:0.77px;color:#e8eaeb;">00:16:08.313</div><span class="msg">time="2025-04-26T00:16:08Z" level=<span class="w">warning</span> <span class="m">msg=</span>"cpuLimitCores metric not available. using default max 96 cores"</span></div>
<div class="row" style="top:34px"><div class="t" style="left:50.08px;top:9.60px;font-size:23.5px;line-height:28px;letter-spacing:0.77px;color:#e8eaeb;">00:16:08.313</div><span class="msg">time="2025-04-26T00:16:08Z" level=<span class="w">warning</span> <span class="m">msg=</span>"cpuLimitCores metric not available. using default max 96 cores"</span></div>
<div class="row" style="top:84px"><div class="t" style="left:50.08px;top:9.60px;font-size:23.5px;line-height:28px;letter-spacing:0.77px;color:#e8eaeb;">00:16:08.313</div><span class="msg">time="2025-04-26T00:16:08Z" level=<span class="w">warning</span> <span class="m">msg=</span>"cpuLimitCores metric not available. using default max 96 cores"</span></div>
<div class="row" style="top:134px"><div class="t" style="left:50.08px;top:9.60px;font-size:23.5px;line-height:28px;letter-spacing:0.77px;color:#e8eaeb;">00:16:08.313</div><span class="msg">time="2025-04-26T00:16:08Z" level=<span class="w">warning</span> <span class="m">msg=</span>"cpuLimitCores metric not available. using default max 96 cores"</span></div>
<div class="row" style="top:184px"><div class="t" style="left:50.08px;top:9.60px;font-size:23.5px;line-height:28px;letter-spacing:0.77px;color:#e8eaeb;">00:16:08.313</div><span class="msg">time="2025-04-26T00:16:08Z" level=<span class="w">warning</span> <span class="m">msg=</span>"cpuLimitCores metric not available. using default max 96 cores"</span></div>
<div class="row" style="top:234px"><i class="dot"></i><div class="t" style="left:50.08px;top:9.60px;font-size:23.5px;line-height:28px;letter-spacing:0.47px;color:#e8eaeb;">00:16:11.937</div><span class="msg">time="2025-04-26T00:16:11Z" level=<span class="e">error</span> <span class="m">msg=</span>"Integration command failed" <span class="e">error</span>="exit status 1" instance=nri-kubernete</span><div class="t" style="left:2053.04px;top:9.60px;font-size:23.5px;line-height:28px;letter-spacing:1.13px;color:#639ae8;">Integration command failed</div><div class="t" style="left:2430.01px;top:9.60px;font-size:23.5px;line-height:28px;letter-spacing:1.21px;color:#639ae8;">error</div></div>
<div class="row" style="top:284px"><i class="dot"></i><div class="t" style="left:50.08px;top:9.60px;font-size:23.5px;line-height:28px;letter-spacing:0.53px;color:#e8eaeb;">00:16:11.950</div><span class="msg">time="2025-04-26T00:16:11Z" level=<span class="e">error</span> <span class="m">msg=</span>"Integration command failed" <span class="e">error</span>="exit status 1" instance=nri-kubernete</span><div class="t" style="left:2053.04px;top:9.60px;font-size:23.5px;line-height:28px;letter-spacing:1.13px;color:#639ae8;">Integration command failed</div><div class="t" style="left:2430.01px;top:9.60px;font-size:23.5px;line-height:28px;letter-spacing:1.21px;color:#639ae8;">error</div></div>
<div class="row" style="top:334px"><div class="t" style="left:50.08px;top:9.60px;font-size:23.5px;line-height:28px;letter-spacing:0.85px;color:#e8eaeb;">00:16:13.849</div><span class="msg">time="2025-04-26T00:16:13Z" level=<span class="w">warning</span> <span class="m">msg=</span>"cpuLimitCores metric not available. using default max 96 cores"</span></div>
<div class="row" style="top:384px"><div class="t" style="left:50.08px;top:9.60px;font-size:23.5px;line-height:28px;letter-spacing:0.85px;color:#e8eaeb;">00:16:13.849</div><span class="msg">time="2025-04-26T00:16:13Z" level=<span class="w">warning</span> <span class="m">msg=</span>"cpuLimitCores metric not available. using default max 96 cores"</span></div>
<div class="row" style="top:434px"><div class="t" style="left:50.08px;top:9.60px;font-size:23.5px;line-height:28px;letter-spacing:0.85px;color:#e8eaeb;">00:16:13.849</div><span class="msg">time="2025-04-26T00:16:13Z" level=<span class="w">warning</span> <span class="m">msg=</span>"cpuLimitCores metric not available. using default max 96 cores"</span></div>
<div class="row" style="top:484px"><div class="t" style="left:50.08px;top:9.60px;font-size:23.5px;line-height:28px;letter-spacing:0.85px;color:#e8eaeb;">00:16:13.849</div><span class="msg">time="2025-04-26T00:16:13Z" level=<span class="w">warning</span> <span class="m">msg=</span>"cpuLimitCores metric not available. using default max 96 cores"</span></div>
<div class="row" style="top:534px"><div class="t" style="left:50.08px;top:9.60px;font-size:23.5px;line-height:28px;letter-spacing:0.85px;color:#e8eaeb;">00:16:13.849</div><span class="msg">time="2025-04-26T00:16:13Z" level=<span class="w">warning</span> <span class="m">msg=</span>"cpuLimitCores metric not available. using default max 96 cores"</span></div>
<div class="row" style="top:584px"><div class="t" style="left:50.08px;top:9.60px;font-size:23.5px;line-height:28px;letter-spacing:0.85px;color:#e8eaeb;">00:16:13.849</div><span class="msg">time="2025-04-26T00:16:13Z" level=<span class="w">warning</span> <span class="m">msg=</span>"cpuLimitCores metric not available. using default max 96 cores"</span></div>
<div class="row" style="top:634px"><div class="t" style="left:50.08px;top:9.60px;font-size:23.5px;line-height:28px;letter-spacing:0.85px;color:#e8eaeb;">00:16:13.849</div><span class="msg">time="2025-04-26T00:16:13Z" level=<span class="w">warning</span> <span class="m">msg=</span>"cpuLimitCores metric not available. using default max 96 cores"</span></div>
<div class="row" style="top:684px"><div class="t" style="left:50.08px;top:9.60px;font-size:23.5px;line-height:28px;letter-spacing:0.85px;color:#e8eaeb;">00:16:13.849</div><span class="msg">time="2025-04-26T00:16:13Z" level=<span class="w">warning</span> <span class="m">msg=</span>"cpuLimitCores metric not available. using default max 96 cores"</span></div>
<div class="row" style="top:734px"><div class="t" style="left:50.08px;top:9.60px;font-size:23.5px;line-height:28px;letter-spacing:0.85px;color:#e8eaeb;">00:16:13.849</div><span class="msg">time="2025-04-26T00:16:13Z" level=<span class="w">warning</span> <span class="m">msg=</span>"cpuLimitCores metric not available. using default max 96 cores"</span></div>
<div class="row" style="top:784px"><div class="t" style="left:50.08px;top:9.60px;font-size:23.5px;line-height:28px;letter-spacing:0.85px;color:#e8eaeb;">00:16:13.849</div><span class="msg">time="2025-04-26T00:16:13Z" level=<span class="w">warning</span> <span class="m">msg=</span>"cpuLimitCores metric not available. using default max 96 cores"</span></div>
<div class="row" style="top:834px"><div class="t" style="left:50.08px;top:9.60px;font-size:23.5px;line-height:28px;letter-spacing:0.85px;color:#e8eaeb;">00:16:13.849</div><span class="msg">time="2025-04-26T00:16:13Z" level=<span class="w">warning</span> <span class="m">msg=</span>"cpuLimitCores metric not available. using default max 96 cores"</span></div>
<div class="row" style="top:884px"><div class="t" style="left:50.08px;top:9.60px;font-size:23.5px;line-height:28px;letter-spacing:0.85px;color:#e8eaeb;">00:16:13.849</div><span class="msg">time="2025-04-26T00:16:13Z" level=<span class="w">warning</span> <span class="m">msg=</span>"cpuLimitCores metric not available. using default max 96 cores"</span></div>
</div>
</body>
</html>
